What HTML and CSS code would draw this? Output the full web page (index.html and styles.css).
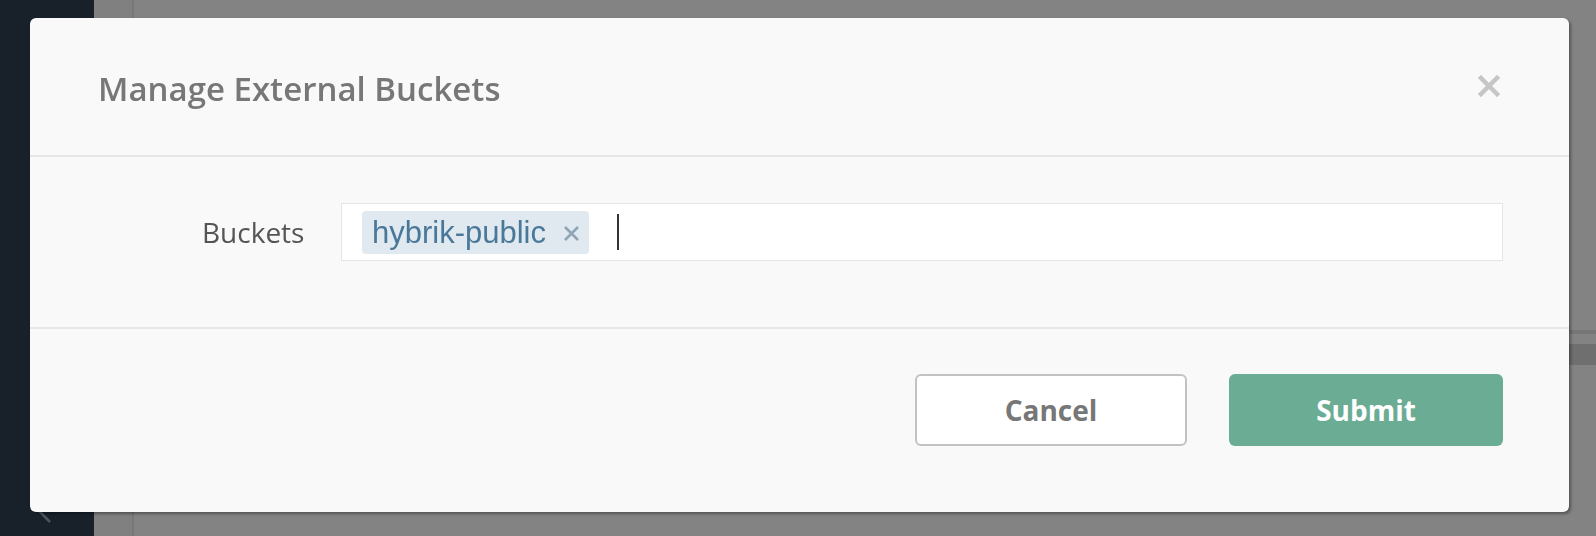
FILE: index.html
```html
<!DOCTYPE html>
<html lang="en">
<head>
    <meta charset="UTF-8">
    <meta name="viewport" content="width=device-width, initial-scale=1.0">
    <title>Manage External Buckets</title>
    <link rel="stylesheet" href="styles.css">
</head>
<body>
    <div class="app">
        <div class="sidebar">
            <svg class="collapse" width="14" height="24" viewBox="0 0 14 24">
                <path d="M13 1 L2 12 L13 23" fill="none" stroke="#4c545e" stroke-width="2.5"/>
            </svg>
        </div>
        <div class="gutter"></div>
        <div class="main">
            <div class="row row-thin"></div>
            <div class="row row-wide"></div>
        </div>
    </div>

    <!-- Модальное окно -->
    <div class="overlay">
        <div class="modal">
            <div class="modal-header">
                <h2 class="modal-title">Manage External Buckets</h2>
                <span class="close">
                    <svg width="22" height="22" viewBox="0 0 22 22">
                        <path d="M3 3 L19 19 M19 3 L3 19" stroke="#c6c6c6" stroke-width="4.5" stroke-linecap="square"/>
                    </svg>
                </span>
            </div>
            <div class="modal-body">
                <label class="field-label">Buckets</label>
                <div class="tag-input">
                    <span class="tag">hybrik-public
                        <svg class="tag-remove" width="17" height="17" viewBox="0 0 17 17">
                            <path d="M2 2 L15 15 M15 2 L2 15" stroke="#8fa5b6" stroke-width="2.6"/>
                        </svg>
                    </span>
                    <span class="caret"></span>
                </div>
            </div>
            <div class="modal-footer">
                <button class="btn btn-cancel">Cancel</button>
                <button class="btn btn-submit">Submit</button>
            </div>
        </div>
    </div>
</body>
</html>
```

FILE: styles.css
```css
* {
    margin: 0px;
    padding: 0px;
    box-sizing: border-box;
}

body {
    font-family: "Open Sans", "Liberation Sans", sans-serif;
    background-color: #808080;
    height: 536px;
    overflow: hidden;
}

.app {
    display: flex;
    height: 536px;
}

.sidebar {
    width: 94px;
    background-color: #18202a;
    display: flex;
    align-items: flex-end;
    padding: 0 0 13px 37px;
}

.gutter {
    width: 40px;
    background-color: #808080;
    border-right: 2px solid #777777;
}

.main {
    flex: 1;
    background-color: #838383;
    padding-top: 330px;
}

/* полоски контента под затемнением */
.row-thin {
    height: 4px;
    background-color: #767676;
    margin-bottom: 10px;
}

.row-wide {
    height: 21px;
    background-color: #6f6f6f;
}

/* Затемнённый слой с модальным окном */
.overlay {
    position: fixed;
    left: 0;
    top: 0;
    width: 100%;
    height: 100%;
    padding: 18px 27px 24px 30px;
}

.modal {
    height: 494px;
    background-color: #f9f9f9;
    border-radius: 6px;
    box-shadow: 2px 2px 3px rgba(0, 0, 0, 0.35);
    display: flex;
    flex-direction: column;
}

.modal-header {
    height: 139px;
    border-bottom: 2px solid #e6e6e6;
    display: flex;
    align-items: center;
    justify-content: space-between;
    padding: 0 69px 0 68px;
}

.modal-title {
    font-size: 33px;
    font-weight: 600;
    color: #777777;
    padding-top: 4px;
}

.close {
    display: flex;
    margin-top: -2px;
}

.modal-body {
    height: 172px;
    border-bottom: 2px solid #e6e6e6;
    display: flex;
    align-items: flex-start;
    padding: 46px 66px 0 172px;
}

.field-label {
    width: 139px;
    font-size: 28px;
    color: #555555;
    line-height: 58px;
}

.tag-input {
    flex: 1;
    height: 58px;
    background-color: #ffffff;
    border: 1px solid #e6e6e6;
    display: flex;
    align-items: center;
    padding-left: 20px;
}

.tag {
    font-family: "Liberation Sans", Arial, sans-serif;
    font-size: 31px;
    color: #4a7899;
    background-color: #e0e9f0;
    border-radius: 4px;
    height: 43px;
    line-height: 43px;
    padding: 0 9px 0 10px;
    display: flex;
    align-items: center;
}

.tag-remove {
    margin-left: 17px;
    margin-top: 2px;
}

.caret {
    width: 2px;
    height: 36px;
    background-color: #333333;
    margin-left: 28px;
}

.modal-footer {
    flex: 1;
    display: flex;
    justify-content: flex-end;
    align-items: flex-start;
    padding: 45px 66px 0 0;
    gap: 42px;
}

.btn {
    font-family: "Open Sans", "Liberation Sans", sans-serif;
    font-size: 28px;
    font-weight: 700;
    height: 72px;
    border-radius: 6px;
    cursor: pointer;
}

.btn-cancel {
    width: 272px;
    background-color: #ffffff;
    border: 2px solid #c2c2c2;
    color: #777777;
}

.btn-submit {
    width: 274px;
    background-color: #6bac95;
    border: none;
    color: #ffffff;
}
```
